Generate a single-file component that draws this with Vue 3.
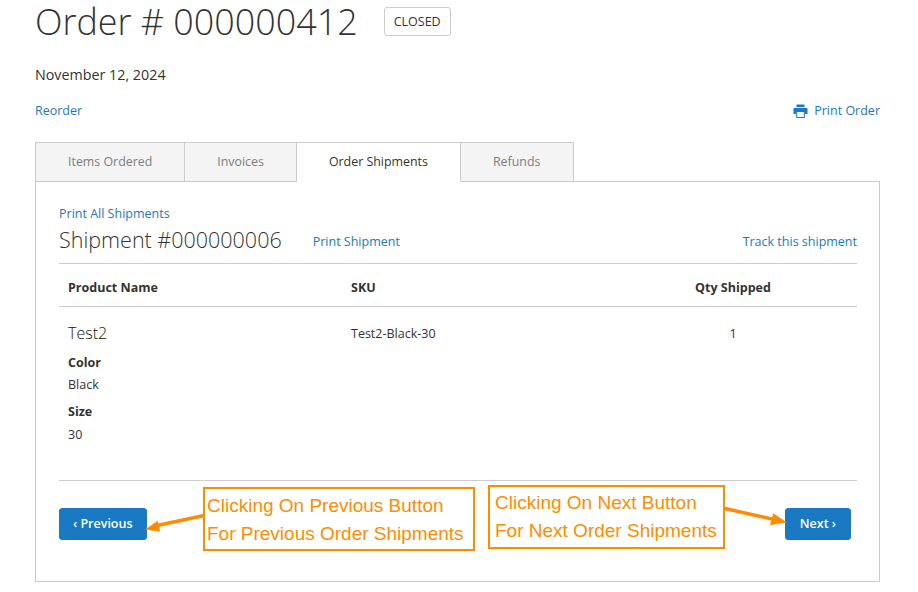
<template>
  <div class="page">
    <div class="title-row">
      <h1 class="title">Order # {{ order.number }}</h1>
      <span class="status">{{ order.status }}</span>
    </div>
    <div class="date">{{ order.date }}</div>
    <div class="actions">
      <a class="link">Reorder</a>
      <a class="link print">
        <svg width="15" height="14" viewBox="0 0 15 14" fill="#1979c3"><path d="M3.500 0.500h8v2.600h-8z"/><path d="M1.500 3.900h12c.6 0 1 .4 1 1v5.200h-2.700V7.600H3.200v2.500H.5V4.900c0-.6.4-1 1-1z"/><path d="M3.200 7h8.600v7H3.200zM4.200 8v5h6.600V8z" fill-rule="evenodd"/></svg>
        Print Order
      </a>
    </div>

    <div class="tabs">
      <div v-for="t in tabs" :key="t" class="tab" :class="{ active: t === 'Order Shipments' }">{{ t }}</div>
    </div>

    <div class="panel">
      <a class="link all">Print All Shipments</a>
      <div class="ship-head">
        <h2 class="ship-title">Shipment #000000006</h2>
        <a class="link ship-print">Print Shipment</a>
        <a class="link track">Track this shipment</a>
      </div>

      <table class="items">
        <colgroup>
          <col style="width: 283px" />
          <col style="width: 267px" />
          <col />
        </colgroup>
        <thead>
          <tr>
            <th>Product Name</th>
            <th>SKU</th>
            <th class="qty">Qty Shipped</th>
          </tr>
        </thead>
        <tbody>
          <tr>
            <td>
              <div class="name">Test2</div>
              <dl class="options">
                <template v-for="o in options" :key="o.label">
                  <dt>{{ o.label }}</dt>
                  <dd>{{ o.value }}</dd>
                </template>
              </dl>
            </td>
            <td class="sku">Test2-Black-30</td>
            <td class="qty sku">1</td>
          </tr>
        </tbody>
      </table>

      <div class="pager">
        <button class="btn">‹ Previous</button>
        <button class="btn next">Next ›</button>
      </div>
    </div>

    <!-- annotations drawn over the screenshot -->
    <div class="note note-prev">Clicking On Previous Button<br />For Previous Order Shipments</div>
    <div class="note note-next">Clicking On Next Button<br />For Next Order Shipments</div>
    <svg class="arrows" width="918" height="592" viewBox="0 0 918 592">
      <path d="M204 515.500L157 525.500" stroke="#ff8c00" stroke-width="3.500" fill="none"/>
      <path d="M145 529.500L157.700 520.700L160 531.700z" fill="#ff8c00"/>
      <path d="M725 508.500L772 519" stroke="#ff8c00" stroke-width="3.500" fill="none"/>
      <path d="M787 522.500L773.300 513.300L770 525z" fill="#ff8c00"/>
    </svg>
  </div>
</template>

<script setup>
const order = { number: '000000412', status: 'CLOSED', date: 'November 12, 2024' }
const tabs = ['Items Ordered', 'Invoices', 'Order Shipments', 'Refunds']
const options = [
  { label: 'Color', value: 'Black' },
  { label: 'Size', value: '30' },
]
</script>

<style>
body { background: #fff; overflow: hidden; }
</style>

<style scoped>
.page { position: relative; width: 918px; height: 592px; padding: 0 38px 0 35px; box-sizing: border-box; overflow: hidden; font: 400 12.5px/18px 'Open Sans', sans-serif; color: #333; }
.title-row { display: flex; align-items: center; height: 44px; }
.title { margin: 0; font: 300 35.9px/44px 'Open Sans', sans-serif; color: #333; }
.status { margin: -2px 0 0 26px; padding: 0 9px; height: 27px; line-height: 27px; border: 1px solid #ccc; border-radius: 3px; font-size: 12.500px; color: #333; }
.date { margin-top: 22px; line-height: 18px; font-size: 14.300px; }
.actions { display: flex; justify-content: space-between; margin-top: 18px; height: 18px; }
.link { color: #1979c3; }
.print { display: flex; align-items: center; gap: 6px; }
.tabs { display: flex; margin-top: 22px; height: 40px; position: relative; z-index: 1; }
.tab { box-sizing: border-box; height: 40px; padding: 0 32px; line-height: 37px; font-size: 12.400px; background: #f4f4f4; color: #7d7d7d; border: 1px solid #ccc; border-left-width: 0; }
.tab:first-child { border-left-width: 1px; }
.tab:last-child { padding-right: 33px; }
.tab.active { background: #fff; color: #333; border-bottom-color: #fff; border-left-width: 0; }
.panel { margin-top: -1px; height: 401px; box-sizing: border-box; border: 1px solid #ccc; padding: 23px 22px 0 23px; }
.all { display: block; line-height: 18px; }
.ship-head { display: flex; align-items: flex-start; margin-top: 2px; height: 38px; border-bottom: 1px solid #ccc; }
.ship-title { margin: 0; font: 300 21.500px/30px 'Open Sans', sans-serif; color: #333; }
.ship-print { margin: 8px 0 0 31px; }
.track { margin: 8px 0 0 auto; }
.items { width: 100%; border-collapse: collapse; table-layout: fixed; }
.items th { padding: 6px 9px 0; height: 42px; box-sizing: border-box; text-align: left; font-weight: 700; border-bottom: 1px solid #ccc; }
.items td { padding: 0 9px; vertical-align: top; }
.items .qty { text-align: center; }
.sku { padding-top: 18px !important; }
.items tbody tr { height: 174px; }
.items tbody td { border-bottom: 1px solid #ccc; }
.name { margin-top: 15px; font: 300 16px/22px 'Open Sans', sans-serif; color: #111; }
.options { margin: 10px 0 0; }
.options dt { font-weight: 700; line-height: 18px; }
.options dd { margin: 4px 0 9px; line-height: 18px; }
.options dd:last-child { margin-top: 5px; }
.pager { display: flex; justify-content: space-between; margin-top: 27px; padding-right: 6px; }
.btn { height: 32px; padding: 0 13px; border: 1px solid #1979c3; border-radius: 3px; background: #1979c3; color: #fff; font: 600 12.500px/30px 'Open Sans', sans-serif; }
.next { padding: 0 14px; }
.note { position: absolute; box-sizing: border-box; height: 64px; padding: 3px 2px; border: 2px solid #ff8c00; background: #fff; color: #ff8c00; font: 400 19px/28px 'Liberation Sans', sans-serif; white-space: nowrap; }
.note-prev { left: 203px; top: 487px; width: 272px; }
.note-next { left: 488px; top: 485px; width: 237px; padding: 2px 5px; }
.arrows { position: absolute; left: 0; top: 0; pointer-events: none; }
</style>
